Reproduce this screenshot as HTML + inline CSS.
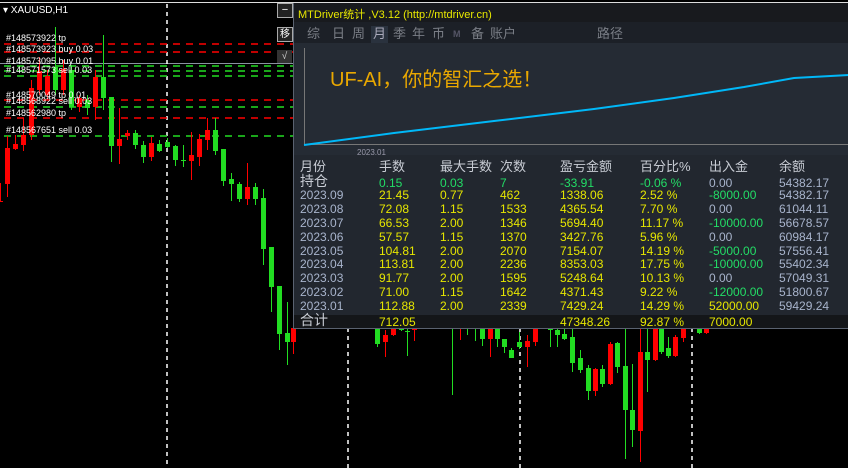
<!DOCTYPE html>
<html><head><meta charset="utf-8"><style>
body{margin:0;width:848px;height:468px;background:#000;overflow:hidden;position:relative;font-family:"Liberation Sans","Noto Sans CJK SC",sans-serif}
.a{position:absolute;white-space:nowrap}
.lbl{position:absolute;color:#fff;font-size:9px;line-height:10px}
#panel{position:absolute;left:293px;top:3px;width:555px;height:325px;background:#22272f;border-left:1px solid #5a6270;border-bottom:1px solid #5a6270}
.t{position:absolute;font-size:12px;line-height:14px}
.tab span{position:absolute;top:0}
</style></head><body>
<svg class="a" style="left:0;top:0" width="848" height="468">
<line x1="0" y1="2.5" x2="848" y2="2.5" stroke="#ddd" stroke-width="1"/>
<line x1="0" y1="63.5" x2="293" y2="63.5" stroke="#8a92a0"/>
<g stroke="#fff" stroke-width="1.5" stroke-dasharray="4,4">
<line x1="167" y1="4" x2="167" y2="468"/><line x1="348" y1="328" x2="348" y2="468"/><line x1="520" y1="328" x2="520" y2="468"/><line x1="692" y1="328" x2="692" y2="468"/>
</g>
<g stroke-width="1.5" stroke-dasharray="7,6">
<line x1="4" y1="44" x2="293" y2="44" stroke="#f00"/><line x1="4" y1="52" x2="293" y2="52" stroke="#f00"/>
<line x1="4" y1="66" x2="293" y2="66" stroke="#2d2"/><line x1="4" y1="71" x2="293" y2="71" stroke="#2d2"/><line x1="4" y1="76" x2="293" y2="76" stroke="#2d2"/>
<line x1="4" y1="100" x2="293" y2="100" stroke="#f00"/><line x1="4" y1="107" x2="293" y2="107" stroke="#2d2"/><line x1="4" y1="118" x2="293" y2="118" stroke="#f00"/><line x1="4" y1="136" x2="293" y2="136" stroke="#2d2"/>
</g>
<g id="c"></g>
</svg>
<div class="lbl" style="left:6px;top:33px">#148573922 tp</div>
<div class="lbl" style="left:6px;top:44px">#148573923 buy 0.03</div>
<div class="lbl" style="left:6px;top:56px">#148573095 buy 0.01</div>
<div class="lbl" style="left:6px;top:65px">#148571573 sell 0.03</div>
<div class="lbl" style="left:6px;top:90px">#148570049 tp 0.01</div>
<div class="lbl" style="left:6px;top:96px">#148568922 sell 0.03</div>
<div class="lbl" style="left:6px;top:108px">#148562980 tp</div>
<div class="lbl" style="left:6px;top:125px">#148567651 sell 0.03</div>
<div class="a" style="left:3px;top:5px;color:#fff;font-size:10px">▾ XAUUSD,H1</div>
<div class="a" style="left:277px;top:3px;width:14px;height:13px;border:1px solid #aaa;color:#fff;font-size:11px;line-height:12px;text-align:center;background:#222">−</div>
<div class="a" style="left:277px;top:27px;width:14px;height:13px;border:1px solid #aaa;color:#fff;font-size:10px;line-height:13px;text-align:center;background:#222">移</div>
<div class="a" style="left:277px;top:50px;width:15px;height:13px;color:#ccc;font-size:10px;line-height:13px;text-align:center;background:#333">√</div>
<div id="panel">
<div class="a" style="left:0;top:0;width:555px;height:19px;background:#181a1e"></div>
<div class="a" style="left:4px;top:3px;color:#e8e800;font-size:11px">MTDriver统计 ,V3.12 (http://mtdriver.cn)</div>
<div class="a" style="left:0;top:19px;width:555px;height:21px;background:#1c2027"></div>
<div class="a" style="left:77px;top:23px;width:17px;height:17px;background:#2a323e"></div>
<div class="a tab" style="left:0;top:23px;color:#7a7e86;font-size:13px;line-height:16px">
<span style="left:13px">综</span><span style="left:38px">日</span><span style="left:58px">周</span><span style="left:79px;color:#aab">月</span><span style="left:99px">季</span><span style="left:118px">年</span><span style="left:138px">币</span><span style="left:159px;font-size:9px;font-weight:bold;color:#556">M</span><span style="left:177px">备</span><span style="left:196px">账户</span><span style="left:303px">路径</span></div>
<div class="a" style="left:0;top:40px;width:555px;height:112px;background:#252b34"></div>
<svg class="a" style="left:0;top:40px" width="555" height="115">
<line x1="10.5" y1="5" x2="10.5" y2="102" stroke="#777"/>
<line x1="10" y1="101.5" x2="555" y2="101.5" stroke="#777"/>
<polyline fill="none" stroke="#00b8f8" stroke-width="2" points="10,102 100,90 200,78 300,66 380,55 450,44 500,35 555,32"/>
<text x="63" y="112" fill="#99a" font-size="8" font-family="Liberation Sans">2023.01</text>
</svg>
<div class="a" style="left:36px;top:60px;color:#eaa800;font-size:20px">UF-AI，你的智汇之选！</div>
<div class="a" style="left:0;top:312px;width:555px;height:13px;background:#141619"></div>
<div id="tb"></div>
</div>
<script>
var cs=[[0,183,201,183,201,'r'],[7,136,148,184,197,'r'],[15,135,144,149,150,'r'],[23,118,135,145,151,'r'],[31,80,88,135,140,'r'],[39,57,71,90,95,'r'],[47,70,76,95,100,'r'],[55,27,67,90,95,'g'],[63,60,69,90,95,'r'],[71,65,70,107,110,'g'],[79,95,98,107,112,'r'],[87,95,100,108,115,'g'],[95,70,77,107,120,'r'],[103,35,77,98,110,'g'],[111,97,97,146,162,'g'],[119,108,139,146,164,'r'],[127,130,133,136,140,'r'],[135,130,133,145,149,'g'],[143,141,145,157,163,'g'],[151,137,143,157,161,'r'],[159,140,144,151,152,'g'],[167,138,142,147,148,'g'],[175,145,146,160,166,'g'],[183,145,160,161,167,'g'],[191,132,155,161,180,'r'],[199,134,139,157,166,'r'],[207,118,130,140,150,'r'],[215,118,130,151,155,'g'],[223,149,149,181,186,'g'],[231,173,179,184,201,'g'],[239,182,184,199,202,'g'],[247,163,187,199,205,'r'],[255,183,187,199,205,'g'],[263,189,198,249,265,'g'],[271,247,247,287,312,'g'],[279,286,286,334,350,'g'],[287,302,333,342,365,'g'],
[293,328,328,342,354,'r'],[377,328,328,344,347,'g'],[385,330,335,342,357,'r'],[393,328,328,335,336,'r'],[401,328,328,330,331,'g'],[407,328,331,332,356,'g'],[414,328,328,330,341,'r'],[452,328,328,329,395,'g'],[460,328,328,329,340,'r'],[467,328,328,329,335,'g'],[475,328,328,329,341,'g'],[482,328,328,339,346,'g'],[490,328,328,339,357,'r'],[497,328,328,339,347,'g'],[504,339,339,347,353,'g'],[511,348,350,358,358,'g'],[519,332,342,347,349,'g'],[527,335,341,347,367,'r'],[535,328,328,342,346,'r'],[550,328,328,330,347,'g'],[557,328,330,335,347,'g'],[564,328,334,339,340,'g'],[572,328,337,363,372,'g'],[580,350,358,370,373,'g'],[588,365,368,391,400,'g'],[595,368,369,391,396,'r'],[602,365,369,384,387,'g'],[610,342,344,384,385,'r'],[617,342,343,367,373,'g'],[625,328,366,410,459,'g'],[632,364,410,430,447,'g'],[640,328,352,431,462,'r'],[647,328,352,360,392,'g'],[655,328,328,360,361,'r'],[661,328,328,352,354,'g'],[668,337,348,356,358,'g'],[675,335,337,356,357,'r'],[683,328,328,338,342,'r'],[699,328,328,333,334,'g'],[706,328,328,333,334,'r']];
var s='';cs.forEach(function(c){var col=c[5]=='r'?'#f00':'#2d2';s+='<line x1="'+(c[0]+.5)+'" y1="'+c[1]+'" x2="'+(c[0]+.5)+'" y2="'+c[4]+'" stroke="'+col+'"/><rect x="'+(c[0]-2)+'" y="'+c[2]+'" width="5" height="'+Math.max(1,c[3]-c[2])+'" fill="'+col+'"/>';});
document.getElementById('c').innerHTML=s;
var X=[6,85,146,206,266,346,415,485];
var G='#c8ccd4',B='#a8b4cc',Y='#e6e600',N='#22dd66';
var rows=[
[['月份',G],['手数',G],['最大手数',G],['次数',G],['盈亏金额',G],['百分比%',G],['出入金',G],['余额',G]],
[['持仓',G],['0.15',N],['0.03',N],['7',N],['-33.91',N],['-0.06 %',N],['0.00',B],['54382.17',B]]];
var d=[['2023.09','21.45','0.77','462','1338.06','2.52 %','-8000.00','54382.17'],['2023.08','72.08','1.15','1533','4365.54','7.70 %','0.00','61044.11'],['2023.07','66.53','2.00','1346','5694.40','11.17 %','-10000.00','56678.57'],['2023.06','57.57','1.15','1370','3427.76','5.96 %','0.00','60984.17'],['2023.05','104.81','2.00','2070','7154.07','14.19 %','-5000.00','57556.41'],['2023.04','113.81','2.00','2236','8353.03','17.75 %','-10000.00','55402.34'],['2023.03','91.77','2.00','1595','5248.64','10.13 %','0.00','57049.31'],['2023.02','71.00','1.15','1642','4371.43','9.22 %','-12000.00','51800.67'],['2023.01','112.88','2.00','2339','7429.24','14.29 %','52000.00','59429.24']];
d.forEach(function(r){rows.push(r.map(function(v,i){var c=i==0||i==7?B:Y;if(i==6)c=v=='0.00'?B:(v[0]=='-'?N:Y);return [v,c];}));});
rows.push([['合计',G],['712.05',Y],['',Y],['',Y],['47348.26',Y],['92.87 %',Y],['7000.00',Y],['',Y]]);
var h='';rows.forEach(function(r,ri){var top=ri==0?159:(ri==1?173:171+(ri-1)*13.9);if(ri==11)top=312;r.forEach(function(c,i){var fs=(ri<2||ri==11)&&i==0?14:12;if(ri==0)fs=13;h+='<div class="t" style="left:'+X[i]+'px;top:'+(top-(fs>12?2:0))+'px;color:'+c[1]+';font-size:'+fs+'px">'+c[0]+'</div>';});});
document.getElementById('tb').innerHTML=h;
</script>
</body></html>
